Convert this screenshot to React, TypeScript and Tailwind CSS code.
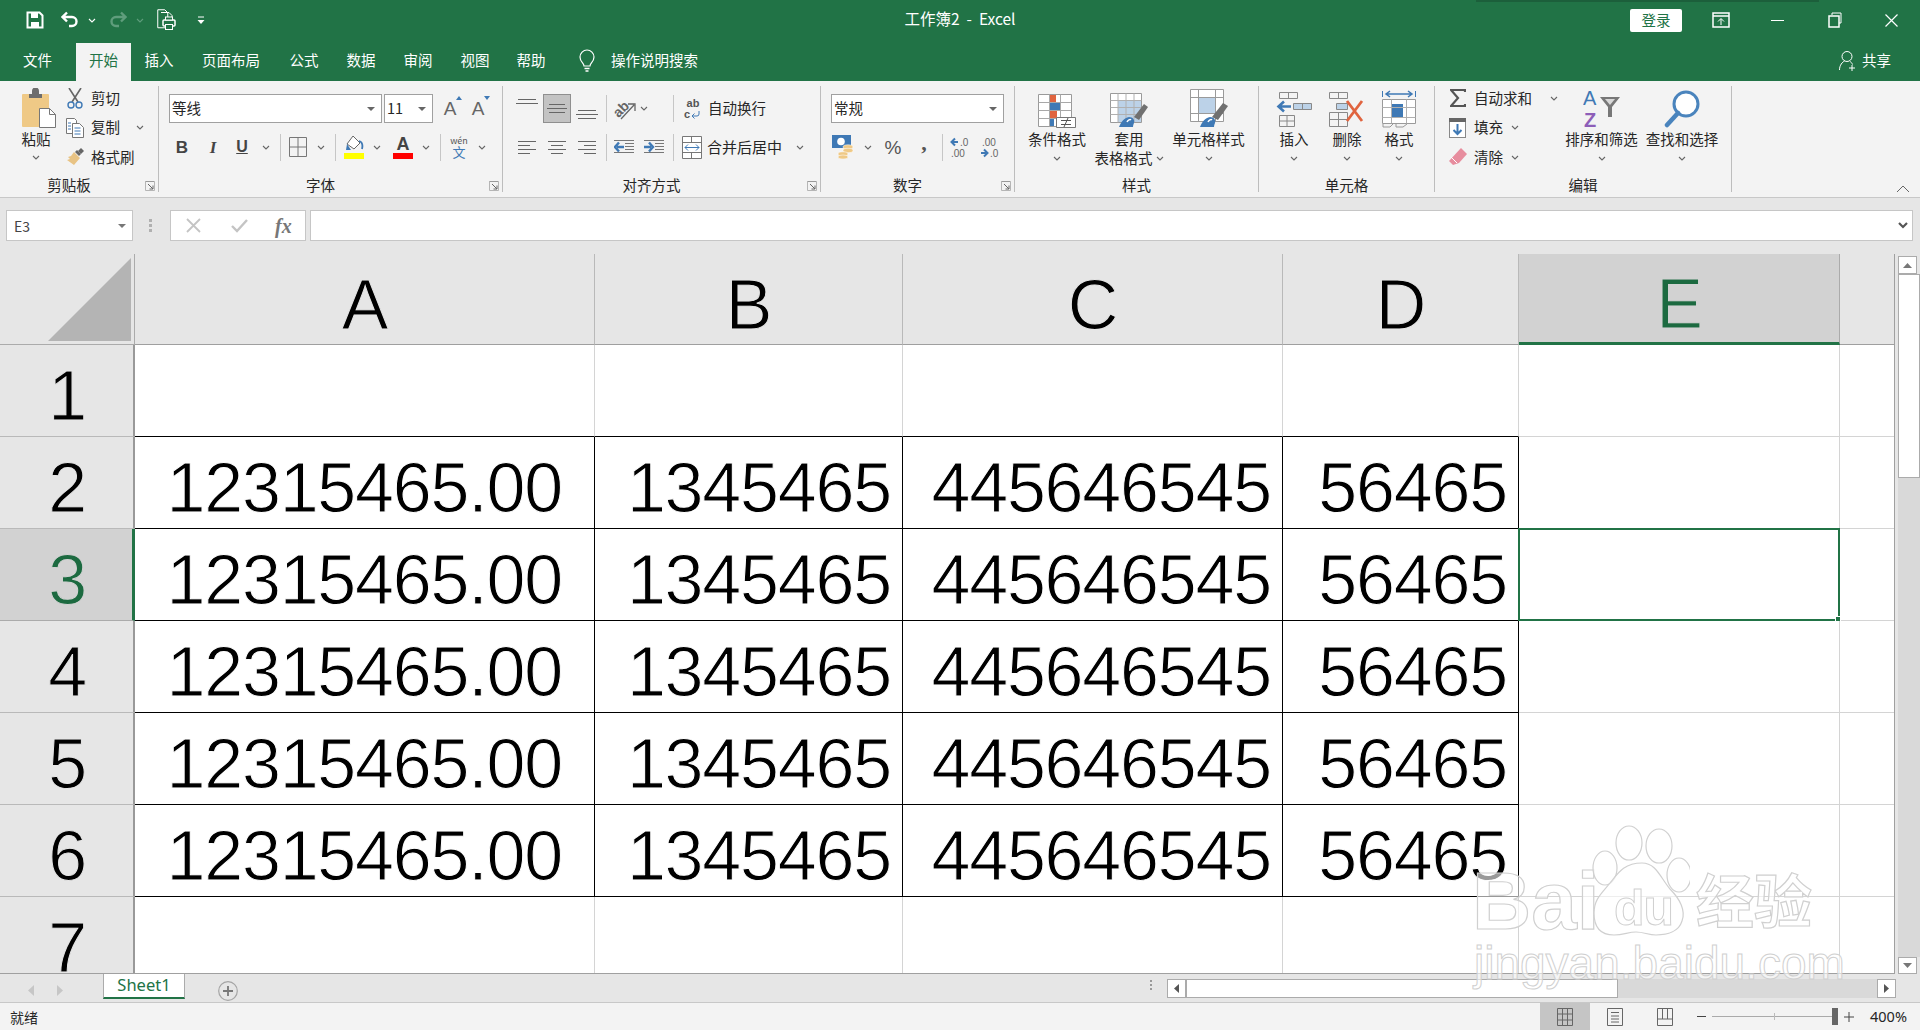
import React from "react";

const Dd = ({ c = "#666", cls = "" }: { c?: string; cls?: string }) => (
  <svg width="8" height="5" viewBox="0 0 8 5" className={`shrink-0 ${cls}`}>
    <path d="M1 1l3 3 3-3" fill="none" stroke={c} strokeWidth="1.1" />
  </svg>
);
const Sep = ({ cls = "" }: { cls?: string }) => <div className={`w-px h-[27px] bg-[#c6c6c6] shrink-0 ${cls}`} />;
const Launcher = ({ cls = "" }: { cls?: string }) => (
  <svg width="10" height="10" viewBox="0 0 10 10" className={`absolute right-[3px] bottom-[1px] ${cls}`}>
    <path d="M.5 5V.5H9.5" fill="none" stroke="#9a9a9a" />
    <path d="M.5 .5V9.5H9.5V.5" fill="none" stroke="#b5b5b5" />
    <path d="M3 3l5 5M8 4.5V8H4.5" fill="none" stroke="#666" />
  </svg>
);
const Lines = ({ rows, cls = "" }: { rows: [number, number][]; cls?: string }) => (
  <svg width="22" height="16" viewBox="0 0 22 16" className={`shrink-0 ${cls}`}>
    {rows.map(([x, y], i) => (
      <rect key={i} x={x} y={y} width={22 - 2 * x} height="1" fill="#666" />
    ))}
  </svg>
);
const AlignH = ({ rows, cls = "" }: { rows: [number, number][]; cls?: string }) => (
  <svg width="18" height="14" viewBox="0 0 18 14" className={`shrink-0 ${cls}`}>
    {rows.map(([x, w], i) => (
      <rect key={i} x={x} y={1 + i * 4} width={w} height="1" fill="#666" />
    ))}
  </svg>
);
const Indent = ({ flip, cls = "" }: { flip?: boolean; cls?: string }) => (
  <svg width="20" height="16" viewBox="0 0 20 16" className={`shrink-0 ${cls}`}>
    {[1, 4, 7, 10, 13].map((y) => (
      <rect key={y} x="0" y={y} width="20" height="1" fill="#777" />
    ))}
    <rect x="0" y="3" width="11" height="10" fill="#f3f3f3" />
    {flip ? (
      <path d="M0 8h7M5 3.500L9 8 5 12.500" fill="none" stroke="#3f79b5" strokeWidth="2.400" />
    ) : (
      <path d="M10 8H3M5 3.500L1 8l4 4.500" fill="none" stroke="#3f79b5" strokeWidth="2.400" />
    )}
  </svg>
);
const Paste = () => (
  <svg width="36" height="40" viewBox="0 0 36 40" className="shrink-0">
    <rect x="0" y="6" width="27" height="33" rx="1" fill="#efc986" />
    <path d="M7 6h3V3a3 3 0 0 1 7 0v3h3v4H7z" fill="#6d6d6d" />
    <path d="M17.500 20.500h10l6 6v13h-16z" fill="#fff" stroke="#777" />
    <path d="M27.500 20.500v6h6" fill="none" stroke="#777" />
  </svg>
);
const Scissors = () => (
  <svg width="16" height="21" viewBox="0 0 16 21">
    <path d="M2 0l9 14M14 0L5 14" stroke="#666" strokeWidth="1.600" fill="none" />
    <circle cx="4" cy="17" r="3" fill="none" stroke="#3f79b5" strokeWidth="1.400" />
    <circle cx="12" cy="17" r="3" fill="none" stroke="#3f79b5" strokeWidth="1.400" />
  </svg>
);
const Copy = () => (
  <svg width="18" height="20" viewBox="0 0 18 20">
    <path d="M.5.500h8l2 2v13H.5z" fill="#fff" stroke="#777" />
    <path d="M6.500 5.500h7l4 4v10h-11z" fill="#fff" stroke="#777" />
    <path d="M2 5h3M2 8h3M2 11h3M8.500 10h6M8.500 13h6M8.500 16h6" stroke="#3f79b5" />
  </svg>
);
const Painter = () => (
  <svg width="18" height="18" viewBox="0 0 18 18">
    <path d="M11 2l4 4-2 2-4-4z" fill="#666" />
    <path d="M15 0l3 3-3 3-3-3z" fill="#666" />
    <path d="M8 4l6 6-6 7-7-5 3-1-2-2 3-1z" fill="#e8c384" />
  </svg>
);
const Borders = () => (
  <svg width="18" height="20" viewBox="0 0 18 20">
    <path d="M.5.500h17v19H.5zM9 .5v19M.5 10h17" fill="none" stroke="#777" />
  </svg>
);
const Fill = () => (
  <svg width="20" height="24" viewBox="0 0 20 24">
    <path d="M9 1l7 7-6 6-7-5z" fill="#fff" stroke="#666" />
    <path d="M15 6c3 1 4 4 3 8" fill="none" stroke="#3f79b5" strokeWidth="1.800" />
    <path d="M3 9l4 6H2z" fill="#3f79b5" />
    <rect x="0" y="18" width="20" height="6" fill="#ffff00" />
  </svg>
);
const Orient = () => (
  <svg width="24" height="24" viewBox="0 0 24 24">
    <text x="1" y="16" transform="rotate(-45 10 12)" fontSize="14" fontFamily="Liberation Sans" fill="#666" fontWeight="700">ab</text>
    <path d="M9 22L22 8M16 7h7v7" fill="none" stroke="#666" strokeWidth="1.300" />
  </svg>
);
const Merge = () => (
  <svg width="20" height="23" viewBox="0 0 20 23">
    <path d="M.5.500h19v22H.5z" fill="#fff" stroke="#777" />
    <path d="M.5 6.500h19M.5 16.500h19M9.500 .5v6M9.500 16.500v6" stroke="#777" />
    <path d="M3 11.500h14M6 8.500l-3 3 3 3M14 8.500l3 3-3 3" fill="none" stroke="#3f79b5" />
  </svg>
);
const Currency = () => (
  <svg width="24" height="24" viewBox="0 0 24 24">
    <rect x="0" y="0" width="19" height="13" fill="#3f79b5" />
    <circle cx="9" cy="6.500" r="3.800" fill="#fff" />
    <ellipse cx="16" cy="12" rx="5" ry="2.200" fill="#efc986" stroke="#fff" strokeWidth=".5" />
    <ellipse cx="16" cy="15.500" rx="5" ry="2.200" fill="#efc986" stroke="#fff" strokeWidth=".5" />
    <ellipse cx="11" cy="19" rx="5" ry="2.200" fill="#efc986" stroke="#fff" strokeWidth=".5" />
    <ellipse cx="11" cy="22" rx="5" ry="2" fill="#efc986" stroke="#fff" strokeWidth=".5" />
  </svg>
);
const Decimal = ({ inc }: { inc?: boolean }) => (
  <svg width="24" height="22" viewBox="0 0 24 22">
    <path d={inc ? "M8 6H2M5 2.500L1.500 6 5 9.500" : "M2 17h6M5 13.500L8.500 17 5 20.500"} fill="none" stroke="#3f79b5" strokeWidth="2" />
    <text x={inc ? 10 : 3} y="10" fontSize="10" fontFamily="Liberation Sans" fill="#666">{inc ? ".0" : ".00"}</text>
    <text x={inc ? 1 : 11} y="21" fontSize="10" fontFamily="Liberation Sans" fill="#666">{inc ? ".00" : ".0"}</text>
  </svg>
);
const CondFormat = () => (
  <svg width="38" height="34" viewBox="0 0 38 34">
    <path d="M.5.500h33v32H.5z" fill="#fff" stroke="#9a9a9a" />
    <rect x="11" y="1" width="7" height="7" fill="#e0643f" />
    <rect x="11" y="9" width="11" height="7" fill="#3f79b5" />
    <rect x="11" y="17" width="8" height="7" fill="#e0643f" />
    <rect x="11" y="25" width="5" height="7" fill="#3f79b5" />
    <path d="M.5 8.500h33M.5 16.500h33M.5 24.500h33M11.500 .5v32M22.500 .5v32" fill="none" stroke="#a8a8a8" />
    <path d="M18.500 23.500h19v10h-19z" fill="#fff" stroke="#777" />
    <path d="M23 26.500h10M23 30.500h10M30 24l-4 9" stroke="#555" fill="none" />
  </svg>
);
const TableFmt = () => (
  <svg width="38" height="35" viewBox="0 0 38 35">
    <path d="M.5.500h31v29H.5z" fill="#fff" stroke="#9a9a9a" />
    <rect x="8" y="8" width="23" height="21" fill="#bcd2e8" />
    <path d="M.5 7.500h31M.5 14.500h31M.5 21.500h31M8 .5v29M16 .5v29M24 .5v29" stroke="#b0b0b0" />
    <path d="M24 24L34 11l4 3-9 13z" fill="#707070" />
    <path d="M9 34c2-5 5-9 10-10 4 0 6 3 5 6-1 2-1 4-1 4z" fill="#3f79b5" />
    <path d="M17 29c1-2 3-3 4-2" stroke="#fff" fill="none" strokeWidth="1.500" />
  </svg>
);
const CellStyle = () => (
  <svg width="38" height="39" viewBox="0 0 38 39">
    <path d="M.5.500h33v32H.5z" fill="#fff" stroke="#9a9a9a" />
    <rect x="9" y="9" width="16" height="15" fill="#bcd2e8" />
    <path d="M.5 8.500h33M.5 24.500h33M8.500 .5v32M25.500 .5v32" fill="none" stroke="#9a9a9a" />
    <path d="M22 28L33 14l5 3-10 14z" fill="#707070" />
    <path d="M10 38c2-5 5-9 10-10 4 0 6 3 5 6-1 2-1 4-1 4z" fill="#3f79b5" />
    <path d="M18 33c1-2 3-3 4-2" stroke="#fff" fill="none" strokeWidth="1.500" />
  </svg>
);
const InsertCell = () => (
  <svg width="36" height="36" viewBox="0 0 36 36">
    <path d="M3.500.5h18v6h-18zM12.500 .5v6M3.500 23.500h15v11h-15zM3.500 29h15M11 23.500v11" fill="none" stroke="#888" />
    <path d="M17.500 11.500h18v6h-18zM26.500 11.500v6" fill="#bcd2e8" stroke="#888" />
    <path d="M15 14.500H3M8 9.500l-5.500 5 5.500 5" fill="none" stroke="#3f79b5" strokeWidth="2.600" />
  </svg>
);
const DeleteCell = () => (
  <svg width="36" height="36" viewBox="0 0 36 36">
    <path d="M.5.500h18v6H.5zM9.500 .5v6M.5 20.500h18v14H.5zM.5 27.500h18M9.500 20.500v14" fill="none" stroke="#888" />
    <path d="M7.500 11.500h11v6h-11z" fill="#bcd2e8" stroke="#888" />
    <path d="M18 9l15 20M33 9L18 29" stroke="#e0643f" strokeWidth="2.800" />
  </svg>
);
const FormatCell = () => (
  <svg width="34" height="38" viewBox="0 0 34 38">
    <path d="M.5 1v6M33.500 1v6" stroke="#3f79b5" />
    <path d="M4 4h26M8 1L4 4l4 3M26 1l4 3-4 3" fill="none" stroke="#3f79b5" strokeWidth="1.500" />
    <path d="M.5 9.500h33v24H.5z" fill="#fff" stroke="#9a9a9a" />
    <rect x="9" y="14" width="12" height="14" fill="#3f79b5" />
    <path d="M.5 17.500h33M.5 27.500h33M9.500 9.500v24M24.500 9.500v24" fill="none" stroke="#b0b0b0" />
    <path d="M1 34v3h7l3-3M14 34v3h7l4-3" fill="none" stroke="#999" />
  </svg>
);
const Sigma = () => (
  <svg width="16" height="18" viewBox="0 0 16 18">
    <path d="M15 3V1H1l7 8-7 8h14v-2" fill="none" stroke="#555" strokeWidth="2.200" />
  </svg>
);
const FillDown = () => (
  <svg width="18" height="20" viewBox="0 0 18 20">
    <rect x=".5" y=".5" width="16" height="19" fill="#fff" stroke="#888" />
    <rect x="0" y="0" width="17" height="4" fill="#666" />
    <path d="M8.500 6v10M4.500 12l4 4 4-4" fill="none" stroke="#3f79b5" strokeWidth="2" />
  </svg>
);
const Eraser = () => (
  <svg width="18" height="18" viewBox="0 0 18 18">
    <path d="M12 0l6 6-8 9-6 2-4-4z" fill="#e78d9e" />
    <path d="M2 9l6 6" stroke="#fff" />
  </svg>
);
const SortIcon = () => (
  <svg width="38" height="40" viewBox="0 0 38 40">
    <text x="0" y="17" fontSize="20" fontFamily="Liberation Sans" fill="#3f79b5">A</text>
    <text x="1" y="39" fontSize="20" fontFamily="Liberation Sans" fill="#8d5eb8" fontWeight="700">Z</text>
    <path d="M17 9h20l-8 10v10h-4V19z" fill="#777" />
    <path d="M22 11h10l-5 6z" fill="#d8d8d8" />
  </svg>
);
const FindIcon = () => (
  <svg width="36" height="38" viewBox="0 0 36 38">
    <circle cx="22" cy="14" r="12" fill="#fff" stroke="#4a84bd" strokeWidth="3" />
    <path d="M14 23L3 35" stroke="#4a84bd" strokeWidth="4.500" strokeLinecap="round" />
  </svg>
);

const SmallRow = ({ icon, text, dd, ddCls = "" }: { icon: React.ReactNode; text: string; dd?: boolean; ddCls?: string }) => (
  <div className="flex items-center h-[24px]">
    <div className="w-[20px] flex justify-center shrink-0">{icon}</div>
    <span className="ml-[6px] text-[14.5px] leading-none whitespace-nowrap">{text}</span>
    {dd && <Dd cls={ddCls} />}
  </div>
);
const Big = ({ icon, w, label, second }: { icon: React.ReactNode; w: string; label: string; second?: string }) => (
  <div className={`flex flex-col items-center shrink-0 ${w}`}>
    <div className="h-[42px] flex items-end justify-center">{icon}</div>
    <div className="mt-[1px] h-[20px] flex items-center text-[14.5px] leading-none whitespace-nowrap">{label}</div>
    {second ? (
      <div className="h-[18px] flex items-center text-[14.5px] leading-none whitespace-nowrap">
        {second}
        <Dd cls="ml-[3px]" />
      </div>
    ) : (
      <div className="h-[18px] flex items-center">
        <Dd />
      </div>
    )}
  </div>
);
const Group = ({ w, label, launcher, children }: { w: string; label: string; launcher?: boolean; children: React.ReactNode }) => (
  <div className={`relative shrink-0 h-[106px] flex flex-col border-r border-[#bdbdbd] ${w}`}>
    <div className="h-[92px] shrink-0">{children}</div>
    <div className={`h-[15px] shrink-0 flex items-center justify-center text-[14.5px] leading-none ${launcher ? "pr-[20px]" : ""}`}>{label}</div>
    {launcher && <Launcher />}
  </div>
);
const Combo = ({ w, text }: { w: string; text: string }) => (
  <div className={`h-[29px] bg-white border border-[#a0a0a0] flex items-center justify-between pl-[2px] pr-[6px] shrink-0 ${w}`}>
    <span className="text-[14.5px] leading-none">{text}</span>
    <svg width="8" height="4" viewBox="0 0 8 4">
      <path d="M0 0h8L4 4z" fill="#666" />
    </svg>
  </div>
);

const letters = ["A", "B", "C", "D", "E"];
const values = ["12315465.00", "1345465", "445646545", "56465"];
const big = "[font-family:'Liberation_Sans',sans-serif] text-[70px] leading-none tracking-[-1.2px]";
const thinGrey = "[-webkit-text-stroke:1px_#e6e6e6]";
const thinActive = "[-webkit-text-stroke:1px_#d2d2d2]";
const thinWhite = "[-webkit-text-stroke:1px_#ffffff]";

export default function App() {
  return (
    <div className="relative w-[1920px] h-[1030px] overflow-hidden bg-[#e6e6e6] text-[#262626] [font-family:'Noto_Sans_CJK_SC',sans-serif]">
      {/* Title + tabs */}
      <div className="relative h-[81px] bg-[#217346] text-white">
        <div className="absolute top-0 left-[1476px] w-[343px] h-[2px] bg-[#1c5f3b]" />
        <div className="grid grid-cols-[1fr_auto_1fr] h-[40px] items-center">
          <div className="flex items-center">
            <svg width="18" height="18" viewBox="0 0 18 18" className="ml-[26px]">
              <path d="M1.500 1.500h12l3 3v12h-15z" fill="none" stroke="#fff" strokeWidth="2" />
              <rect x="5" y="2" width="7" height="5" fill="#fff" />
              <rect x="5" y="11" width="8" height="5" fill="#fff" />
            </svg>
            <svg width="18" height="18" viewBox="0 0 18 18" className="ml-[17px]">
              <path d="M2 6h9a4.500 4.500 0 0 1 0 9H8M6 1.500L1.500 6 6 10.500" fill="none" stroke="#fff" strokeWidth="2.400" />
            </svg>
            <Dd c="#fff" cls="ml-[9px]" />
            <svg width="18" height="18" viewBox="0 0 18 18" className="ml-[13px]">
              <path d="M16 6H7a4.500 4.500 0 0 0 0 9h3M12 1.500L16.500 6 12 10.500" fill="none" stroke="#5f9d7c" strokeWidth="2.400" />
            </svg>
            <Dd c="#5f9d7c" cls="ml-[9px]" />
            <svg width="19" height="22" viewBox="0 0 19 22" className="ml-[13px]">
              <path d="M.75.750h7l3 3v15h-10z" fill="none" stroke="#fff" />
              <path d="M4 3.500h8l3 3v4" fill="none" stroke="#fff" />
              <rect x="6" y="11" width="12" height="6" rx="1" fill="#217346" stroke="#fff" strokeWidth="1.500" />
              <rect x="8.500" y="8" width="7" height="3" fill="#217346" stroke="#fff" />
              <rect x="8.500" y="15.500" width="7" height="5" fill="#217346" stroke="#fff" />
            </svg>
            <svg width="8" height="9" viewBox="0 0 8 9" className="ml-[21px]">
              <path d="M1 1h6" stroke="#fff" />
              <path d="M.5 4h7L4 8z" fill="#fff" />
            </svg>
          </div>
          <div className="text-[15.5px] leading-none whitespace-nowrap pb-[3px]">工作簿2&nbsp; -&nbsp; Excel</div>
          <div className="flex items-center justify-end">
            <div className="w-[52px] h-[23px] bg-white rounded-[2px] text-[#217346] text-[14.5px] flex items-center justify-center leading-none">登录</div>
            <div className="ml-[10px] w-[57px] flex justify-center">
              <svg width="18" height="16" viewBox="0 0 18 16">
                <path d="M1 1h16v14H1z" fill="none" stroke="#fff" strokeWidth="1.500" />
                <path d="M1 4h16" stroke="#fff" strokeWidth="1.500" />
                <path d="M9 13V7M6 9.500L9 6.500l3 3" fill="none" stroke="#fff" />
              </svg>
            </div>
            <div className="w-[57px] flex justify-center">
              <div className="w-[13px] h-px bg-white" />
            </div>
            <div className="w-[57px] flex justify-center">
              <svg width="14" height="16" viewBox="0 0 14 16">
                <path d="M4 3V1h9v10h-2" fill="none" stroke="#fff" />
                <rect x="1" y="4" width="10" height="11" fill="none" stroke="#fff" strokeWidth="1.500" />
              </svg>
            </div>
            <div className="w-[57px] flex justify-center">
              <svg width="13" height="13" viewBox="0 0 13 13">
                <path d="M.5.500l12 12M12.500 .5l-12 12" stroke="#fff" strokeWidth="1.200" />
              </svg>
            </div>
          </div>
        </div>
        <div className="mt-[3px] h-[38px] pb-[3px] flex items-center text-[14.5px] leading-none">
          <div className="w-[75px] text-center">文件</div>
          <div className="ml-px w-[55px] h-[38px] self-start pb-[3px] bg-[#f3f3f3] text-[#217346] flex items-center justify-center">开始</div>
          <div className="w-[56px] text-center">插入</div>
          <div className="w-[88px] text-center">页面布局</div>
          <div className="w-[58px] text-center">公式</div>
          <div className="w-[56px] text-center">数据</div>
          <div className="w-[58px] text-center">审阅</div>
          <div className="w-[56px] text-center">视图</div>
          <div className="w-[56px] text-center">帮助</div>
          <svg width="16" height="24" viewBox="0 0 16 24" className="ml-[20px]">
            <path d="M5 17c0-3-4-4-4-9a7 7 0 0 1 14 0c0 5-4 6-4 9z" fill="none" stroke="#fff" strokeWidth="1.200" />
            <path d="M5.500 19.500h5M6.500 22h3" stroke="#fff" strokeWidth="1.400" />
          </svg>
          <span className="ml-[16px]">操作说明搜索</span>
          <div className="flex-1 flex justify-end items-center pr-[29px]">
            <svg width="17" height="22" viewBox="0 0 17 22">
              <circle cx="8" cy="6.500" r="5" fill="none" stroke="#fff" />
              <path d="M.5 20c0-5 3-8 5-9M11 11.500c1 .5 2 1.500 2.500 3M13 15v6M10 18h6" fill="none" stroke="#fff" />
            </svg>
            <span className="ml-[6px]">共享</span>
          </div>
        </div>
      </div>

      {/* Ribbon */}
      <div className="relative h-[117px] bg-[#f3f3f3] border-b border-[#c8c8c8] pt-[5px] flex">
        <Group w="w-[159px]" label="剪贴板" launcher>
          <div className="flex">
            <div className="w-[60px] pl-[14px] flex flex-col">
              <div className="pl-[8px] mt-[2px]"><Paste /></div>
              <div className="w-[44px] text-center text-[14.5px] leading-none mt-[2px] pt-[2px]">粘贴</div>
              <div className="w-[44px] flex justify-center mt-[8px]"><Dd /></div>
            </div>
            <div className="ml-[5px] flex flex-col gap-[5.5px]">
              <SmallRow icon={<Scissors />} text="剪切" />
              <SmallRow icon={<Copy />} text="复制" dd ddCls="ml-[16px]" />
              <SmallRow icon={<Painter />} text="格式刷" />
            </div>
          </div>
        </Group>
        <Group w="w-[344px]" label="字体" launcher>
          <div className="flex items-center mt-[8px] pl-[10px]">
            <Combo w="w-[213px]" text="等线" />
            <Combo w="w-[49px] ml-[2px]" text="11" />
            <div className="w-[28px] ml-[3px] text-center text-[19px] leading-none text-[#666] relative [font-family:'Liberation_Sans',sans-serif]">
              A
              <svg width="6" height="4" viewBox="0 0 6 4" className="absolute -top-[3px] right-[2px]"><path d="M3 0l3 4H0z" fill="#3f79b5" /></svg>
            </div>
            <div className="w-[28px] text-center text-[19px] leading-none text-[#666] relative [font-family:'Liberation_Sans',sans-serif]">
              A
              <svg width="6" height="4" viewBox="0 0 6 4" className="absolute -top-[3px] right-[2px]"><path d="M0 0h6L3 4z" fill="#3f79b5" /></svg>
            </div>
          </div>
          <div className="flex items-center mt-[12px] h-[24px] pl-[10px]">
            <span className="ml-[6px] w-[14px] text-center font-bold text-[17px] leading-none text-[#444] [font-family:'Liberation_Sans',sans-serif]">B</span>
            <span className="ml-[17px] w-[14px] text-center italic font-bold text-[17px] leading-none text-[#444] [font-family:'Liberation_Serif',serif]">I</span>
            <span className="ml-[15px] w-[14px] text-center underline font-bold text-[16px] leading-none text-[#444] [font-family:'Liberation_Sans',sans-serif]">U</span>
            <Dd cls="ml-[13px]" />
            <Sep cls="ml-[10px]" />
            <div className="ml-[8px] w-[18px] flex justify-center"><Borders /></div>
            <Dd cls="ml-[10px]" />
            <Sep cls="ml-[10px]" />
            <div className="ml-[8px]"><Fill /></div>
            <Dd cls="ml-[9px]" />
            <div className="ml-[12px] w-[20px] flex flex-col items-center leading-none">
              <span className="text-[18px] h-[18px] font-bold text-[#444] leading-[18px] [font-family:'Liberation_Sans',sans-serif]">A</span>
              <div className="w-[20px] h-[6px] bg-[#ff0000]" />
            </div>
            <Dd cls="ml-[9px]" />
            <Sep cls="ml-[10px]" />
            <div className="ml-[9px] w-[18px] flex flex-col items-center leading-none text-[#3f79b5]">
              <span className="text-[9px] text-[#555] leading-none">wén</span>
              <span className="text-[13px] leading-none">文</span>
            </div>
            <Dd cls="ml-[10px]" />
          </div>
        </Group>
        <Group w="w-[318px]" label="对齐方式" launcher>
          <div className="flex items-center mt-[8px] h-[29px]">
            <Lines rows={[[2, 2], [0, 6]]} cls="ml-[13px] -mt-[8px]" />
            <div className="ml-[5px] w-[28px] h-[29px] bg-[#c3c3c3] border border-[#8f8f8f] flex items-center justify-center">
              <Lines rows={[[3, 3], [1, 7], [3, 11]]} />
            </div>
            <Lines rows={[[2, 5], [0, 9], [2, 13]]} cls="ml-[5px] mt-[8px]" />
            <Sep cls="ml-[8px]" />
            <div className="ml-[5px]"><Orient /></div>
            <Dd cls="ml-[4px]" />
            <Sep cls="ml-[25px]" />
            <div className="ml-[9px] w-[20px] flex flex-col items-center text-[#555] font-bold leading-none text-[11px] [font-family:'Liberation_Sans',sans-serif]">
              <span className="leading-[11px]">ab</span>
              <span className="leading-[11px] w-[20px] pl-[1px] flex items-center">c<svg width="9" height="9" viewBox="0 0 9 9" className="ml-[1px]"><path d="M8 1v3a2 2 0 0 1-2 2H1M3.500 3.500L1 6l2.500 2.500" fill="none" stroke="#3f79b5" /></svg></span>
            </div>
            <span className="ml-[5px] text-[14.5px] leading-none">自动换行</span>
          </div>
          <div className="flex items-center mt-[12px] h-[24px]">
            <AlignH rows={[[0, 18], [0, 12], [0, 18], [0, 12]]} cls="ml-[15px]" />
            <AlignH rows={[[0, 18], [3, 12], [0, 18], [3, 12]]} cls="ml-[12px]" />
            <AlignH rows={[[0, 18], [6, 12], [0, 18], [6, 12]]} cls="ml-[12px]" />
            <Sep cls="ml-[10px]" />
            <Indent cls="ml-[7px]" />
            <Indent flip cls="ml-[10px]" />
            <Sep cls="ml-[9px]" />
            <div className="ml-[8px]"><Merge /></div>
            <span className="ml-[5px] text-[15px] leading-none -mt-[2px]">合并后居中</span>
            <Dd cls="ml-[14px]" />
          </div>
        </Group>
        <Group w="w-[194px]" label="数字" launcher>
          <div className="flex items-center mt-[8px] pl-[10px]">
            <Combo w="w-[173px]" text="常规" />
          </div>
          <div className="flex items-center mt-[12px] h-[24px]">
            <div className="ml-[11px]"><Currency /></div>
            <Dd cls="ml-[8px]" />
            <span className="ml-[11px] w-[20px] text-center text-[19px] leading-none text-[#555] [font-family:'Liberation_Sans',sans-serif]">%</span>
            <span className="ml-[16px] w-[10px] text-center text-[22px] font-bold leading-none text-[#555] -mt-[8px] [font-family:'Liberation_Serif',serif]">,</span>
            <Sep cls="ml-[13px]" />
            <div className="ml-[7px]"><Decimal inc /></div>
            <div className="ml-[5px]"><Decimal /></div>
          </div>
        </Group>
        <Group w="w-[244px]" label="样式">
          <div className="flex">
            <Big icon={<CondFormat />} w="w-[84px]" label="条件格式" />
            <Big icon={<TableFmt />} w="w-[60px]" label="套用" second="表格格式" />
            <Big icon={<CellStyle />} w="w-[99px]" label="单元格样式" />
          </div>
        </Group>
        <Group w="w-[176px]" label="单元格">
          <div className="flex">
            <Big icon={<InsertCell />} w="w-[70px]" label="插入" />
            <Big icon={<DeleteCell />} w="w-[36px]" label="删除" />
            <Big icon={<FormatCell />} w="w-[68px]" label="格式" />
          </div>
        </Group>
        <Group w="w-[297px]" label="编辑">
          <div className="flex">
            <div className="w-[128px] pl-[13px] flex flex-col gap-[5.5px] shrink-0">
              <SmallRow icon={<Sigma />} text="自动求和" dd ddCls="ml-[18px]" />
              <SmallRow icon={<FillDown />} text="填充" dd ddCls="ml-[8px]" />
              <SmallRow icon={<Eraser />} text="清除" dd ddCls="ml-[8px]" />
            </div>
            <Big icon={<SortIcon />} w="w-[77px]" label="排序和筛选" />
            <Big icon={<FindIcon />} w="w-[84px]" label="查找和选择" />
          </div>
        </Group>
        <svg width="14" height="8" viewBox="0 0 14 8" className="absolute right-[10px] bottom-[4px]">
          <path d="M1 7l6-6 6 6" fill="none" stroke="#666" />
        </svg>
      </div>

      {/* Formula bar */}
      <div className="h-[56px] pt-[12px] flex items-start bg-[#e6e6e6]">
        <div className="ml-[6px] w-[127px] h-[31px] bg-white border border-[#c6c6c6] flex items-center justify-between pl-[7px] pr-[6px] shrink-0">
          <span className="text-[14px] leading-none text-[#444]">E3</span>
          <svg width="8" height="4" viewBox="0 0 8 4"><path d="M0 0h8L4 4z" fill="#777" /></svg>
        </div>
        <div className="ml-[16px] w-[4px] h-[31px] flex flex-col justify-center gap-[2px] shrink-0">
          <div className="w-[3px] h-[3px] bg-[#b0b0b0]" />
          <div className="w-[3px] h-[3px] bg-[#b0b0b0]" />
          <div className="w-[3px] h-[3px] bg-[#b0b0b0]" />
        </div>
        <div className="ml-[17px] w-[136px] h-[31px] bg-white border border-[#c6c6c6] flex items-center shrink-0">
          <svg width="15" height="15" viewBox="0 0 15 15" className="ml-[15px] shrink-0"><path d="M1 1l13 13M14 1L1 14" stroke="#c4c4c4" strokeWidth="1.800" /></svg>
          <svg width="17" height="14" viewBox="0 0 17 14" className="ml-[30px] shrink-0"><path d="M1 7l5 5L16 1" fill="none" stroke="#c4c4c4" strokeWidth="2.400" /></svg>
          <span className="ml-[27px] text-[20px] italic font-bold leading-none text-[#777] [font-family:'Liberation_Serif',serif]">fx</span>
        </div>
        <div className="ml-[4px] w-[1603px] h-[31px] bg-white border border-[#c6c6c6] flex items-center justify-end pr-[4px] shrink-0">
          <svg width="10" height="8" viewBox="0 0 10 8"><path d="M1 1l4 4 4-4" fill="none" stroke="#555" strokeWidth="2.200" /></svg>
        </div>
      </div>

      {/* Sheet */}
      <div className="h-[720px] flex">
        <div className="w-[1895px] shrink-0 overflow-hidden border-r border-b border-[#a0a0a0] h-[720px] relative">
          <div className="grid grid-cols-[135px_460px_308px_380px_236px_321px_54px] grid-rows-[91px_repeat(7,92px)] h-[735px]">
            <div className="relative bg-[#e6e6e6] border-r border-b border-[#ababab]">
              <div className="absolute left-[48px] top-[4px] w-[83px] h-[83px] bg-[#b4b4b4] [clip-path:polygon(100%_0,100%_100%,0_100%)]" />
            </div>
            {letters.map((l) =>
              l === "E" ? (
                <div key={l} className="relative bg-[#d2d2d2] border-r border-b-[3px] border-r-[#ababab] border-b-[#217346] text-[#1c6a40] flex items-center justify-center pt-[12px]">
                  <span className={`${big} ${thinActive}`}>{l}</span>
                </div>
              ) : (
                <div key={l} className="bg-[#e6e6e6] border-r border-b border-r-[#b9b9b9] border-b-[#9f9f9f] flex items-center justify-center pt-[12px] text-black">
                  <span className={`${big} ${thinGrey}`}>{l}</span>
                </div>
              )
            )}
            <div className="bg-[#e6e6e6] border-b border-[#9f9f9f]" />
            {[1, 2, 3, 4, 5, 6, 7].flatMap((r) => {
              const active = r === 3;
              const inTable = r >= 2 && r <= 6;
              return [
                <div
                  key={`h${r}`}
                  className={
                    active
                      ? "bg-[#d2d2d2] border-r-[3px] border-b border-r-[#217346] border-b-[#ababab] text-[#1c6a40] flex items-center justify-center pt-[10px] pl-[2px]"
                      : "bg-[#e6e6e6] border-r-2 border-b border-r-[#999999] border-b-[#b9b9b9] text-black flex items-center justify-center pt-[10px] pl-px"
                  }
                >
                  <span className={`${big} ${active ? thinActive : thinGrey}`}>{r}</span>
                </div>,
                ...values.map((v, i) => (
                  <div
                    key={`${r}-${i}`}
                    className={
                      inTable
                        ? `border-r border-b border-black bg-white text-black flex items-center justify-end pt-[10px] ${i === 0 ? "pr-[32px]" : "pr-[11px]"}`
                        : r === 1
                          ? "border-r border-b border-r-[#d4d4d4] border-b-black bg-white"
                          : "border-r border-b border-[#d4d4d4] bg-white"
                    }
                  >
                    {inTable && <span className={`${big} ${thinWhite}`}>{v}</span>}
                  </div>
                )),
                <div key={`e${r}`} className="relative border-r border-b border-[#d4d4d4] bg-white">
                  {active && (
                    <div className="absolute -left-[1px] -top-[1px] -right-[1px] -bottom-[1px] border-2 border-[#217346]">
                      <div className="absolute -right-[3px] -bottom-[3px] w-[6px] h-[6px] bg-[#217346] border border-white" />
                    </div>
                  )}
                </div>,
                <div key={`f${r}`} className="border-b border-[#d4d4d4] bg-white" />,
              ];
            })}
          </div>
        </div>
        <div className="w-[25px] pt-[2px] pl-[3px] flex flex-col shrink-0 bg-[#e6e6e6]">
          <div className="w-[19px] h-[18px] bg-white border border-[#ababab] flex items-center justify-center">
            <svg width="9" height="5" viewBox="0 0 9 5"><path d="M0 5h9L4.500 0z" fill="#777" /></svg>
          </div>
          <div className="flex-1 bg-[#d9d9d9] flex flex-col">
            <div className="h-[204px] bg-white border border-[#ababab]" />
          </div>
          <div className="w-[19px] h-[17px] bg-white border border-[#ababab] flex items-center justify-center">
            <svg width="9" height="5" viewBox="0 0 9 5"><path d="M0 0h9L4.500 5z" fill="#777" /></svg>
          </div>
        </div>
      </div>

      {/* Sheet tabs */}
      <div className="h-[29px] flex items-start bg-[#e6e6e6] border-b border-[#c8c8c8]">
        <svg width="6" height="11" viewBox="0 0 6 11" className="ml-[28px] mt-[11px] shrink-0"><path d="M6 0v11L0 5.500z" fill="#c6c6c6" /></svg>
        <svg width="6" height="11" viewBox="0 0 6 11" className="ml-[23px] mt-[11px] shrink-0"><path d="M0 0v11l6-5.500z" fill="#c6c6c6" /></svg>
        <div className="ml-[40px] w-[82px] h-[25px] bg-white border-l border-r border-[#ababab] border-b-[2px] border-b-[#217346] text-[#217346] text-[16.5px] leading-none flex items-center justify-center shrink-0 [font-family:'Noto_Sans',sans-serif]">Sheet1</div>
        <svg width="20" height="20" viewBox="0 0 20 20" className="ml-[33px] mt-[7px] shrink-0">
          <circle cx="10" cy="10" r="9.300" fill="none" stroke="#a5a5a5" strokeWidth="1.200" />
          <path d="M10 5v10M5 10h10" stroke="#777" strokeWidth="1.800" />
        </svg>
        <div className="ml-[912px] mt-[6px] flex flex-col gap-[2px] shrink-0">
          <div className="w-[2px] h-[2px] bg-[#999]" />
          <div className="w-[2px] h-[2px] bg-[#999]" />
          <div className="w-[2px] h-[2px] bg-[#999]" />
        </div>
        <div className="ml-[15px] mt-[5px] w-[729px] h-[19px] bg-[#d9d9d9] flex shrink-0">
          <div className="w-[19px] h-[19px] bg-white border border-[#ababab] flex items-center justify-center shrink-0">
            <svg width="5" height="9" viewBox="0 0 5 9"><path d="M5 0v9L0 4.500z" fill="#555" /></svg>
          </div>
          <div className="w-[432px] h-[19px] bg-white border border-[#ababab] shrink-0" />
          <div className="flex-1" />
          <div className="w-[19px] h-[19px] bg-white border border-[#ababab] flex items-center justify-center shrink-0">
            <svg width="5" height="9" viewBox="0 0 5 9"><path d="M0 0v9l5-4.500z" fill="#555" /></svg>
          </div>
        </div>
      </div>

      {/* Status bar */}
      <div className="h-[27px] bg-[#f3f3f3] flex items-center text-[14px] leading-none">
        <span className="ml-[10px]">就绪</span>
        <div className="ml-auto w-[50px] h-[27px] bg-[#c5c5c5] flex items-center justify-center shrink-0">
          <svg width="16" height="18" viewBox="0 0 16 18"><path d="M.5.500h15v17H.5zM.5 6h15M.5 12h15M5.500 .5v17M10.500 .5v17" fill="none" stroke="#666" /></svg>
        </div>
        <div className="w-[50px] flex justify-center shrink-0">
          <svg width="16" height="18" viewBox="0 0 16 18"><path d="M.5.500h15v17H.5zM4 4.500h8M4 8h8M4 11h8M4 14h8" fill="none" stroke="#666" /></svg>
        </div>
        <div className="w-[50px] flex justify-center shrink-0">
          <svg width="16" height="18" viewBox="0 0 16 18"><path d="M.5.500h15v17H.5zM.5 11h15M5.500 .5V11M10.500 .5V11" fill="none" stroke="#666" /></svg>
        </div>
        <div className="ml-[7px] w-[9px] h-px bg-[#444] shrink-0" />
        <div className="relative ml-[6px] w-[121px] h-px bg-[#aaa] shrink-0">
          <div className="absolute left-[62px] -top-[3px] w-px h-[7px] bg-[#bbb]" />
          <div className="absolute -right-[5px] -top-[8px] w-[6px] h-[17px] bg-[#666]" />
        </div>
        <svg width="10" height="10" viewBox="0 0 10 10" className="ml-[11px] shrink-0"><path d="M5 0v10M0 5h10" stroke="#444" /></svg>
        <span className="ml-[16px] mr-[11px] w-[39px] text-[14.5px] shrink-0 [font-family:'Noto_Sans',sans-serif]">400%</span>
      </div>

      {/* Watermark */}
      <div className="absolute left-[1470px] top-[855px] w-[350px] h-[140px] pointer-events-none">
        <span className="absolute left-[2px] top-[5px] text-[82px] font-bold leading-none text-white/60 [-webkit-text-stroke:1.2px_#d0d0d0] [font-family:'Liberation_Sans',sans-serif]">Bai</span>
        <svg width="100" height="112" viewBox="0 0 100 112" className="absolute left-[120px] -top-[30px]">
          <ellipse cx="15" cy="43" rx="12" ry="17" fill="rgba(255,255,255,.6)" stroke="#d0d0d0" strokeWidth="1.200" />
          <ellipse cx="39" cy="18" rx="13" ry="17" fill="rgba(255,255,255,.6)" stroke="#d0d0d0" strokeWidth="1.200" />
          <ellipse cx="69" cy="21" rx="13" ry="17" fill="rgba(255,255,255,.6)" stroke="#d0d0d0" strokeWidth="1.200" />
          <ellipse cx="89" cy="50" rx="12" ry="17" fill="rgba(255,255,255,.6)" stroke="#d0d0d0" strokeWidth="1.200" />
          <path d="M52 38c14 0 18 14 28 26 10 10 16 22 12 32-3 10-14 14-26 14-8 0-12-3-20-3s-12 3-22 3C10 110 4 102 4 88c0-14 8-20 16-30 8-10 14-20 32-20z" fill="rgba(255,255,255,.6)" stroke="#d0d0d0" strokeWidth="1.200" />
        </svg>
        <span className="absolute left-[144px] top-[28px] text-[50px] font-bold leading-none tracking-[-1px] text-white/60 [-webkit-text-stroke:1px_#d0d0d0] [font-family:'Liberation_Sans',sans-serif]">du</span>
        <span className="absolute left-[226px] top-[14px] text-[58px] leading-none font-bold text-white/60 [-webkit-text-stroke:1.2px_#d0d0d0]">经验</span>
        <span className="absolute left-[4px] top-[85px] text-[46px] leading-none whitespace-nowrap text-white/60 [-webkit-text-stroke:1px_#d0d0d0] [font-family:'Liberation_Sans',sans-serif]">jingyan.baidu.com</span>
      </div>
    </div>
  );
}
